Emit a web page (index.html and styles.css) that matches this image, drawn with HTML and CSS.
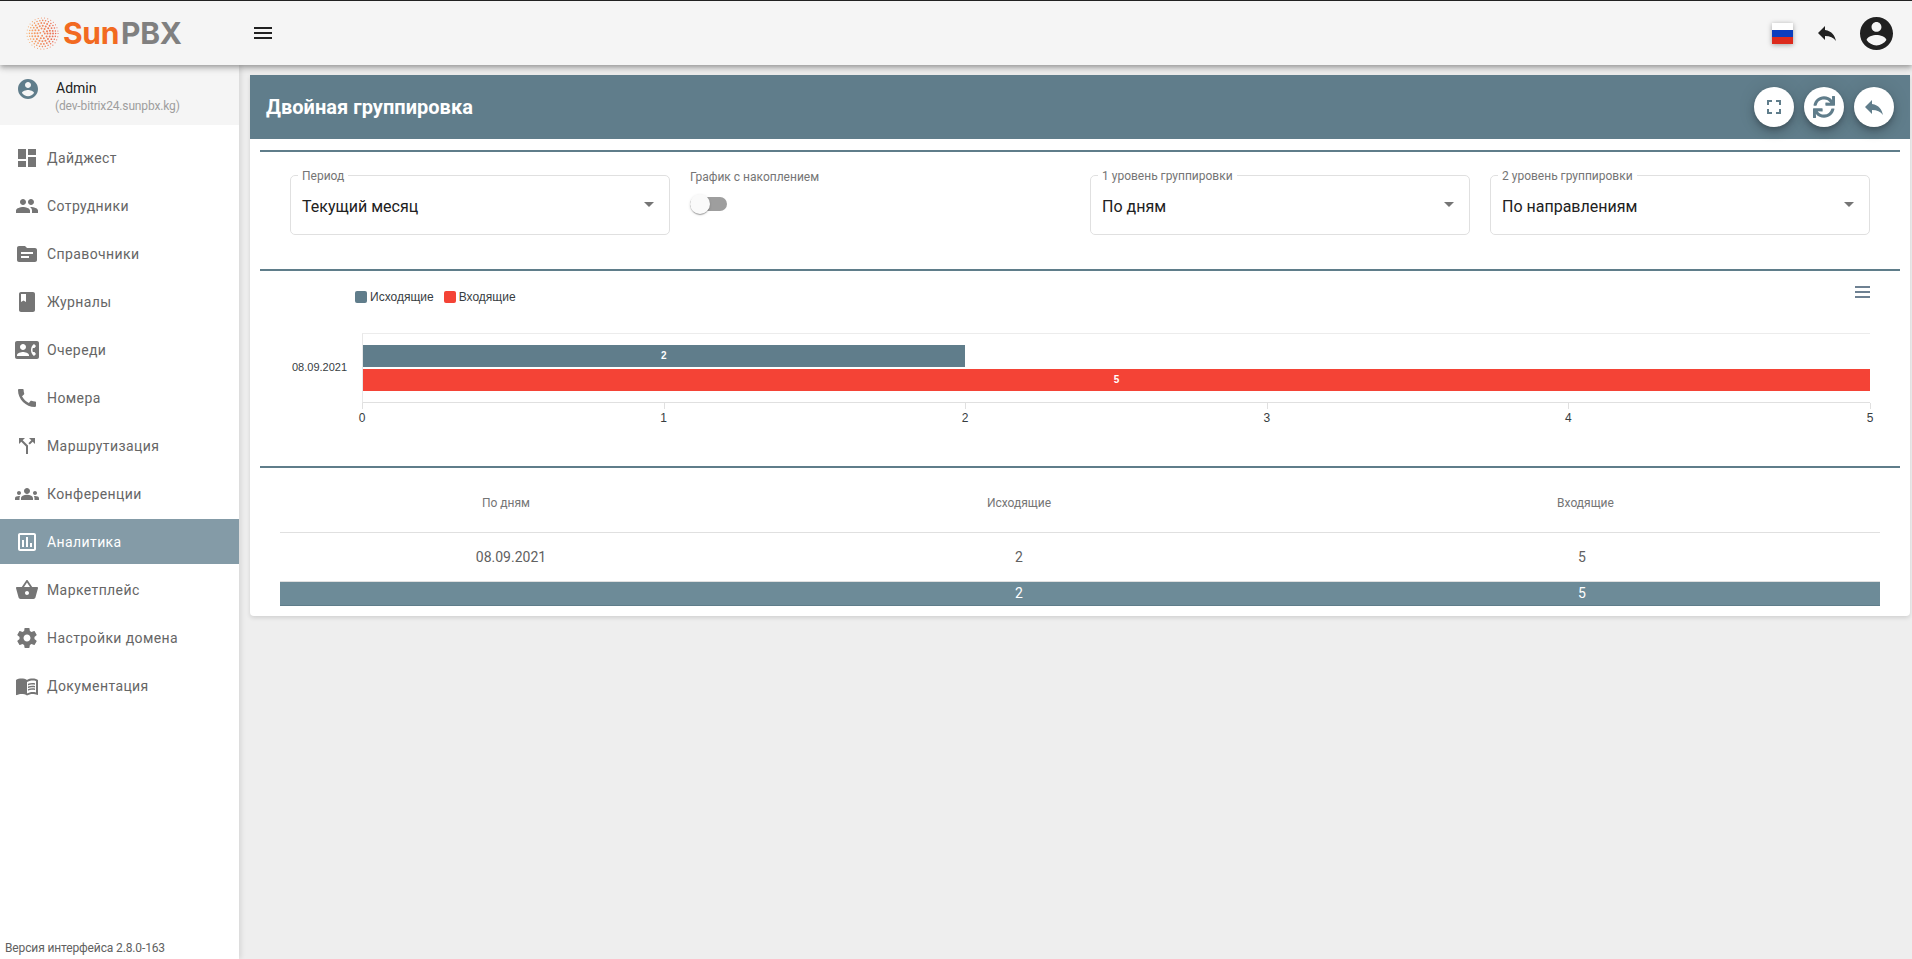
FILE: index.html
```html
<!DOCTYPE html>
<html lang="ru">
<head>
<meta charset="utf-8">
<title>SunPBX</title>
<link rel="stylesheet" href="styles.css">
</head>
<body>
<header class="topbar">
  <div class="logo">
    <svg class="logo-sun" viewBox="0 0 36 36">
      <defs>
        <linearGradient id="sun" gradientUnits="userSpaceOnUse" x1="0" y1="18" x2="36" y2="18">
          <stop offset="0" stop-color="#f9b26b"/>
          <stop offset="1" stop-color="#e9604f"/>
        </linearGradient>
      </defs>
      <g fill="none" stroke="url(#sun)" stroke-linecap="round">
        <circle cx="18" cy="18" r="2.5" stroke-width="2" stroke-dasharray="0 3.9"/>
        <circle cx="18" cy="18" r="5.5" stroke-width="2.2" stroke-dasharray="0 3.45"/>
        <circle cx="18" cy="18" r="8.5" stroke-width="2.2" stroke-dasharray="0 3.34"/>
        <circle cx="18" cy="18" r="11.5" stroke-width="2" stroke-dasharray="0 3.28"/>
        <circle cx="18" cy="18" r="14.3" stroke-width="1.7" stroke-dasharray="0 3.2"/>
        <circle cx="18" cy="18" r="17" stroke-width="1.2" stroke-dasharray="0 3.56"/>
      </g>
    </svg>
    <span class="logo-text"><span class="logo-sun-text">Sun</span><span class="logo-pbx">PBX</span></span>
  </div>
  <button class="burger" aria-label="Меню">
    <svg viewBox="0 0 24 24"><path d="M3 18h18v-2H3v2zm0-5h18v-2H3v2zm0-7v2h18V6H3z"/></svg>
  </button>
  <div class="top-actions">
    <span class="flag"><i class="flag-w"></i><i class="flag-b"></i><i class="flag-r"></i></span>
    <svg class="top-reply" viewBox="0 0 24 24"><path d="M10 9V5l-7 7 7 7v-4.1c5 0 8.5 1.6 11 5.1-1-5-4-10-11-11z"/></svg>
    <svg class="top-profile" viewBox="2 2 20 20"><path d="M12 2C6.48 2 2 6.48 2 12s4.48 10 10 10 10-4.48 10-10S17.52 2 12 2zm0 3c1.66 0 3 1.34 3 3s-1.34 3-3 3-3-1.34-3-3 1.34-3 3-3zm0 14.2c-2.5 0-4.71-1.28-6-3.22.03-1.99 4-3.08 6-3.08 1.99 0 5.97 1.09 6 3.08-1.29 1.94-3.5 3.22-6 3.22z"/></svg>
  </div>
</header>

<div class="shell">
  <aside class="sidebar">
    <div class="user">
      <svg class="user-icon" viewBox="2 2 20 20"><path d="M12 2C6.48 2 2 6.48 2 12s4.48 10 10 10 10-4.48 10-10S17.52 2 12 2zm0 3c1.66 0 3 1.34 3 3s-1.34 3-3 3-3-1.34-3-3 1.34-3 3-3zm0 14.2c-2.5 0-4.71-1.28-6-3.22.03-1.99 4-3.08 6-3.08 1.99 0 5.97 1.09 6 3.08-1.29 1.94-3.5 3.22-6 3.22z"/></svg>
      <div class="user-text">
        <div class="user-name">Admin</div>
        <div class="user-domain">(dev-bitrix24.sunpbx.kg)</div>
      </div>
    </div>
    <nav class="menu">
      <a class="menu-item"><svg viewBox="0 0 24 24"><path d="M3 13h8V3H3v10zm0 8h8v-6H3v6zm10 0h8V11h-8v10zm0-18v6h8V3h-8z"/></svg><span>Дайджест</span></a>
      <a class="menu-item"><svg viewBox="0 0 24 24"><path d="M16 11c1.66 0 2.99-1.34 2.99-3S17.66 5 16 5c-1.66 0-3 1.34-3 3s1.34 3 3 3zm-8 0c1.66 0 2.99-1.34 2.99-3S9.66 5 8 5C6.34 5 5 6.34 5 8s1.34 3 3 3zm0 2c-2.33 0-7 1.17-7 3.5V19h14v-2.5c0-2.33-4.67-3.5-7-3.5zm8 0c-.29 0-.62.02-.97.05 1.16.84 1.97 1.97 1.97 3.45V19h6v-2.5c0-2.33-4.67-3.5-7-3.5z"/></svg><span>Сотрудники</span></a>
      <a class="menu-item"><svg viewBox="0 0 24 24"><path d="M20 6h-8l-2-2H4c-1.1 0-1.99.9-1.99 2L2 18c0 1.1.9 2 2 2h16c1.1 0 2-.9 2-2V8c0-1.1-.9-2-2-2zm-6 10H6v-2h8v2zm4-4H6v-2h12v2z"/></svg><span>Справочники</span></a>
      <a class="menu-item"><svg viewBox="0 0 24 24"><path d="M18 2H6c-1.1 0-2 .9-2 2v16c0 1.1.9 2 2 2h12c1.1 0 2-.9 2-2V4c0-1.1-.9-2-2-2zM6 4h5v8l-2.5-1.5L6 12V4z"/></svg><span>Журналы</span></a>
      <a class="menu-item"><svg viewBox="0 0 24 24"><path d="M22 3H2C.9 3 0 3.9 0 5v14c0 1.1.9 2 2 2h20c1.1 0 1.99-.9 1.99-2L24 5c0-1.1-.9-2-2-2zM8 6c1.66 0 3 1.34 3 3s-1.34 3-3 3-3-1.34-3-3 1.34-3 3-3zm6 12H2v-1c0-2 4-3.1 6-3.1s6 1.1 6 3.1v1zm3.85-4h1.64L21 16l-1.99 1.99c-1.31-.98-2.28-2.38-2.73-3.99-.18-.64-.28-1.31-.28-2s.1-1.36.28-2c.45-1.62 1.42-3.01 2.73-3.99L21 8l-1.51 2h-1.64c-.22.63-.35 1.3-.35 2s.13 1.37.35 2z"/></svg><span>Очереди</span></a>
      <a class="menu-item"><svg viewBox="0 0 24 24"><path d="M20.01 15.38c-1.23 0-2.42-.2-3.53-.56-.35-.12-.74-.03-1.01.24l-1.57 1.97c-2.83-1.35-5.48-3.9-6.89-6.83l1.95-1.66c.27-.28.35-.67.24-1.02-.37-1.11-.56-2.3-.56-3.53 0-.54-.45-.99-.99-.99H4.19C3.65 3 3 3.24 3 3.99 3 13.28 10.73 21 20.01 21c.71 0 .99-.63.99-1.18v-3.45c0-.54-.45-.99-.99-.99z"/></svg><span>Номера</span></a>
      <a class="menu-item"><svg viewBox="0 0 24 24"><path d="M14 4l2.29 2.29-2.88 2.88 1.42 1.42 2.88-2.88L20 10V4zm-4 0H4v6l2.29-2.29 4.71 4.7V20h2v-8.41l-5.29-5.3z"/></svg><span>Маршрутизация</span></a>
      <a class="menu-item"><svg viewBox="0 0 24 24"><path d="M12 12.75c1.63 0 3.07.39 4.24.9 1.08.48 1.76 1.56 1.76 2.73V18H6v-1.61c0-1.18.68-2.26 1.76-2.73 1.17-.52 2.61-.91 4.24-.91zM4 13c1.1 0 2-.9 2-2s-.9-2-2-2-2 .9-2 2 .9 2 2 2zm1.13 1.1c-.37-.06-.74-.1-1.13-.1-.99 0-1.93.21-2.78.58C.48 14.9 0 15.62 0 16.43V18h4.5v-1.61c0-.83.23-1.61.63-2.29zM20 13c1.1 0 2-.9 2-2s-.9-2-2-2-2 .9-2 2 .9 2 2 2zm4 3.43c0-.81-.48-1.53-1.22-1.85-.85-.37-1.79-.58-2.78-.58-.39 0-.76.04-1.13.1.4.68.63 1.46.63 2.29V18H24v-1.57zM12 6c1.66 0 3 1.34 3 3s-1.34 3-3 3-3-1.34-3-3 1.34-3 3-3z"/></svg><span>Конференции</span></a>
      <a class="menu-item is-active"><svg viewBox="0 0 24 24"><path d="M19 3H5c-1.1 0-2 .9-2 2v14c0 1.1.9 2 2 2h14c1.1 0 2-.9 2-2V5c0-1.1-.9-2-2-2zm0 16H5V5h14v14zM7 10h2v7H7zm4-3h2v10h-2zm4 6h2v4h-2z"/></svg><span>Аналитика</span></a>
      <a class="menu-item"><svg viewBox="0 0 24 24"><path d="M17.21 9l-4.38-6.56c-.19-.28-.51-.42-.83-.42-.32 0-.64.14-.83.43L6.79 9H2c-.55 0-1 .45-1 1 0 .09.01.18.04.27l2.54 9.27c.23.84 1 1.46 1.92 1.46h13c.92 0 1.69-.62 1.93-1.46l2.54-9.27L23 10c0-.55-.45-1-1-1h-4.79zM9 9l3-4.4L15 9H9zm3 8c-1.1 0-2-.9-2-2s.9-2 2-2 2 .9 2 2-.9 2-2 2z"/></svg><span>Маркетплейс</span></a>
      <a class="menu-item"><svg viewBox="0 0 24 24"><path d="M19.43 12.98c.04-.32.07-.64.07-.98s-.03-.66-.07-.98l2.11-1.65c.19-.15.24-.42.12-.64l-2-3.46c-.12-.22-.39-.3-.61-.22l-2.49 1c-.52-.4-1.08-.73-1.69-.98l-.38-2.65C14.46 2.18 14.25 2 14 2h-4c-.25 0-.46.18-.49.42l-.38 2.65c-.61.25-1.17.59-1.69.98l-2.49-1c-.23-.09-.49 0-.61.22l-2 3.46c-.13.22-.07.49.12.64l2.11 1.65c-.04.32-.07.65-.07.98s.03.66.07.98l-2.11 1.65c-.19.15-.24.42-.12.64l2 3.46c.12.22.39.3.61.22l2.49-1c.52.4 1.08.73 1.69.98l.38 2.65c.03.24.24.42.49.42h4c.25 0 .46-.18.49-.42l.38-2.65c.61-.25 1.17-.59 1.69-.98l2.49 1c.23.09.49 0 .61-.22l2-3.46c.12-.22.07-.49-.12-.64l-2.11-1.65zM12 15.5c-1.93 0-3.5-1.57-3.5-3.5s1.57-3.5 3.5-3.5 3.5 1.57 3.5 3.5-1.57 3.5-3.5 3.5z"/></svg><span>Настройки домена</span></a>
      <a class="menu-item"><svg viewBox="0 0 24 24"><path d="M21 5c-1.11-.35-2.33-.5-3.5-.5-1.95 0-4.05.4-5.5 1.5-1.45-1.1-3.55-1.5-5.5-1.5S2.45 4.9 1 6v14.65c0 .25.25.5.5.5.1 0 .15-.05.25-.05C3.1 20.45 5.05 20 6.5 20c1.95 0 4.05.4 5.5 1.5 1.35-.85 3.8-1.5 5.5-1.5 1.65 0 3.35.3 4.75 1.05.1.05.15.05.25.05.25 0 .5-.25.5-.5V6c-.6-.45-1.25-.75-2-1zm0 13.5c-1.1-.35-2.3-.5-3.5-.5-1.7 0-4.15.65-5.5 1.5V8c1.35-.85 3.8-1.5 5.5-1.5 1.2 0 2.4.15 3.5.5v11.5z"/><path d="M17.5 10.5c.88 0 1.73.09 2.5.26V9.24c-.79-.15-1.64-.24-2.5-.24-1.7 0-3.24.29-4.5.83v1.66c1.13-.64 2.7-.99 4.5-.99zM13 12.49v1.66c1.13-.64 2.7-.99 4.5-.99.88 0 1.73.09 2.5.26V11.9c-.79-.15-1.64-.24-2.5-.24-1.7 0-3.24.3-4.5.83zM17.5 14.33c-1.7 0-3.24.29-4.5.83v1.66c1.13-.64 2.7-.99 4.5-.99.88 0 1.73.09 2.5.26v-1.52c-.79-.16-1.64-.24-2.5-.24z"/></svg><span>Документация</span></a>
    </nav>
    <div class="version">Версия интерфейса 2.8.0-163</div>
  </aside>

  <main class="content">
    <section class="card">
      <div class="card-head">
        <h1 class="card-title">Двойная группировка</h1>
        <div class="card-actions">
          <button class="round-btn" aria-label="На весь экран"><svg class="icon-24" viewBox="0 0 24 24"><path d="M7 14H5v5h5v-2H7v-3zm-2-4h2V7h3V5H5v5zm12 7h-3v2h5v-5h-2v3zM14 5v2h3v3h2V5h-5z"/></svg></button>
          <button class="round-btn" aria-label="Обновить"><svg class="icon-sync" viewBox="0 0 512 512"><path d="M440.65 12.57l4 82.77A247.16 247.16 0 0 0 255.83 8C134.73 8 33.91 94.92 12.29 209.82A12 12 0 0 0 24.09 224h49.05a12 12 0 0 0 11.67-9.26 175.91 175.91 0 0 1 317-56.94l-101.46-4.86a12 12 0 0 0-12.57 12v47.41a12 12 0 0 0 12 12H500a12 12 0 0 0 12-12V12a12 12 0 0 0-12-12h-47.37a12 12 0 0 0-11.98 12.57zM255.83 432a175.61 175.61 0 0 1-146-77.8l101.8 4.87a12 12 0 0 0 12.57-12v-47.4a12 12 0 0 0-12-12H12a12 12 0 0 0-12 12V500a12 12 0 0 0 12 12h47.35a12 12 0 0 0 12-12.6l-4.15-82.57A247.17 247.17 0 0 0 255.83 504c121.11 0 221.93-86.92 243.55-201.82a12 12 0 0 0-11.8-14.18h-49.05a12 12 0 0 0-11.67 9.26A175.86 175.86 0 0 1 255.83 432z"/></svg></button>
          <button class="round-btn" aria-label="Назад"><svg class="icon-24" viewBox="0 0 24 24"><path d="M10 9V5l-7 7 7 7v-4.1c5 0 8.5 1.6 11 5.1-1-5-4-10-11-11z"/></svg></button>
        </div>
      </div>

      <div class="block filters">
        <fieldset class="select">
          <legend>Период</legend>
          <span class="select-value">Текущий месяц</span>
          <i class="caret"></i>
        </fieldset>
        <div class="toggle-field">
          <div class="toggle-label">График с накоплением</div>
          <div class="toggle"><i class="toggle-thumb"></i></div>
        </div>
        <fieldset class="select">
          <legend>1 уровень группировки</legend>
          <span class="select-value">По дням</span>
          <i class="caret"></i>
        </fieldset>
        <fieldset class="select">
          <legend>2 уровень группировки</legend>
          <span class="select-value">По направлениям</span>
          <i class="caret"></i>
        </fieldset>
      </div>

      <div class="block chart">
        <div class="chart-top">
          <div class="legend">
            <span class="legend-item"><i class="swatch swatch-out"></i>Исходящие</span>
            <span class="legend-item"><i class="swatch swatch-in"></i>Входящие</span>
          </div>
          <div class="chart-menu"><i></i><i></i><i></i></div>
        </div>
        <div class="plot-row">
          <div class="plot-cat">08.09.2021</div>
          <div class="plot-area">
            <div class="plot">
              <div class="bar bar-out" style="width:39.93%">2</div>
              <div class="bar bar-in" style="width:100%">5</div>
            </div>
            <div class="axis">
              <span class="tick">0</span><span class="tick">1</span><span class="tick">2</span><span class="tick">3</span><span class="tick">4</span><span class="tick">5</span>
            </div>
          </div>
        </div>
      </div>

      <div class="block table-wrap">
        <table class="table">
          <thead>
            <tr><th>По дням</th><th>Исходящие</th><th>Входящие</th></tr>
          </thead>
          <tbody>
            <tr><td>08.09.2021</td><td>2</td><td>5</td></tr>
          </tbody>
          <tfoot>
            <tr><td></td><td>2</td><td>5</td></tr>
          </tfoot>
        </table>
      </div>
    </section>
  </main>
</div>
</body>
</html>
```

FILE: styles.css
```css
* { box-sizing: border-box; }
html, body { height: 100%; }
body {
  margin: 0;
  height: 959px;
  overflow: hidden;
  background: #eee;
  font-family: Roboto, "Liberation Sans", sans-serif;
  color: #212121;
  display: flex;
  flex-direction: column;
}
button { border: 0; padding: 0; background: none; cursor: pointer; }

/* top bar */
.topbar {
  height: 65px;
  flex: none;
  border-top: 1px solid #222;
  background: #f5f5f5;
  display: flex;
  align-items: center;
  position: relative;
  z-index: 3;
  box-shadow: 0 2px 4px -1px rgba(0,0,0,.2), 0 4px 5px 0 rgba(0,0,0,.14), 0 1px 10px 0 rgba(0,0,0,.12);
}
.logo { width: 239px; padding-left: 26px; display: flex; align-items: center; gap: 4px; }
.logo-sun { width: 33px; height: 33px; flex: none; }
.logo-text { font-family: Inter, Roboto, sans-serif; font-weight: 700; font-size: 30px; letter-spacing: -.3px; line-height: 1; }
.logo-sun-text { color: #f26a21; }
.logo-pbx { color: #808080; margin-left: 2px; }
.burger { width: 24px; height: 24px; margin-left: 12px; }
.burger svg { width: 24px; height: 24px; fill: #212121; display: block; }
.top-actions { margin-left: auto; display: flex; align-items: center; padding-right: 19px; }
.flag { width: 21px; height: 21px; display: flex; flex-direction: column; box-shadow: 0 1px 5px rgba(0,0,0,.35); }
.flag i { flex: 1; display: block; }
.flag-w { background: #fff; }
.flag-b { background: #0a3dbd; }
.flag-r { background: #dc2a1c; }
.top-reply { width: 24px; height: 24px; fill: #212121; margin-left: 22px; }
.top-profile { width: 33px; height: 33px; fill: #212121; margin-left: 21px; }

.shell { flex: 1; display: flex; min-height: 0; }

/* sidebar */
.sidebar {
  width: 239px;
  flex: none;
  background: #fff;
  display: flex;
  flex-direction: column;
  position: relative;
  z-index: 2;
  box-shadow: 2px 0 5px rgba(0,0,0,.1);
}
.user { height: 60px; background: #f5f5f5; display: flex; padding: 14px 0 0 18px; flex: none; }
.user-icon { width: 20px; height: 20px; fill: #607d8b; flex: none; }
.user-text { margin-left: 18px; padding-top: 1px; }
.user-name { font-size: 14px; line-height: 16px; color: #212121; }
.user-domain { font-size: 12px; line-height: 14px; margin-top: 3px; margin-left: -1px; color: #9e9e9e; letter-spacing: -.15px; }
.menu { padding-top: 10px; display: flex; flex-direction: column; gap: 3px; }
.menu-item { height: 45px; display: flex; align-items: center; padding-left: 15px; font-size: 14px; letter-spacing: .4px; color: #666; }
.menu-item svg { width: 24px; height: 24px; fill: #757575; flex: none; margin-right: 8px; }
.menu-item.is-active { background: #849ba7; color: #fff; }
.menu-item.is-active svg { fill: #fff; }
.version { margin-top: auto; padding: 0 0 4px 5px; font-size: 12px; line-height: 14px; color: #616161; letter-spacing: -.13px; }

/* content */
.content { flex: 1; min-width: 0; padding: 10px 2px 0 11px; }
.card { background: #fff; border-radius: 0 0 4px 4px; padding-bottom: 10px; box-shadow: 0 2px 4px rgba(0,0,0,.12); }
.card-head {
  height: 64px;
  background: #607d8b;
  display: flex;
  align-items: center;
  padding: 0 16px;
}
.card-title { margin: 0; font-size: 20px; font-weight: 700; letter-spacing: .03px; color: #fff; }
.card-actions { margin-left: auto; display: flex; gap: 10px; }
.round-btn {
  width: 40px; height: 40px; border-radius: 50%;
  background: #fff;
  display: flex; align-items: center; justify-content: center;
  box-shadow: 0 3px 5px -1px rgba(0,0,0,.2), 0 6px 10px 0 rgba(0,0,0,.14), 0 1px 18px 0 rgba(0,0,0,.12);
}
.icon-24 { width: 24px; height: 24px; fill: #607d8b; }
.icon-sync { width: 22px; height: 22px; fill: #607d8b; }

.block { margin: 11px 10px 0; border-top: 2px solid #5f7d8a; }
.filters {
  height: 119px;
  margin-bottom: 0;
  padding: 23px 10px 0;
  display: grid;
  grid-template-columns: repeat(4, 380px);
  column-gap: 20px;
  justify-content: center;
  align-items: start;
}
.select {
  margin: -7px 0 0;
  padding: 0 11px;
  height: 67px;
  border: 1px solid #e0e0e0;
  border-radius: 5px;
  position: relative;
  min-width: 0;
}
.select legend { padding: 0 4px; margin-left: -4px; font-size: 12px; line-height: 14px; color: #757575; position: relative; top: 1px; }
.select-value { display: block; margin-top: 13px; font-size: 16px; line-height: 24px; color: #212121; }
.caret {
  position: absolute; right: 15px; top: 20px;
  width: 0; height: 0;
  border-left: 5px solid transparent;
  border-right: 5px solid transparent;
  border-top: 5px solid #757575;
}
.toggle-field { margin-top: -5px; }
.toggle-label { font-size: 12px; line-height: 14px; color: #757575; }
.toggle { width: 37px; height: 14px; margin-top: 13px; background: #9e9e9e; border-radius: 7px; position: relative; }
.toggle-thumb {
  position: absolute; left: 0; top: -3px;
  width: 20px; height: 20px; border-radius: 50%;
  background: #fafafa;
  box-shadow: 0 2px 1px -1px rgba(0,0,0,.2), 0 1px 1px 0 rgba(0,0,0,.14), 0 1px 3px 0 rgba(0,0,0,.12);
}

.chart { margin-top: 0; height: 197px; padding-top: 18px; font-family: "Liberation Sans", Arial, sans-serif; }
.chart-top { height: 44px; display: flex; align-items: flex-start; justify-content: space-between; padding-left: 95px; padding-right: 30px; }
.legend { display: flex; gap: 10px; font-size: 12px; line-height: 12px; color: #373d3f; }
.legend-item { display: flex; align-items: center; padding-top: 2px; }
.swatch { width: 12px; height: 12px; border-radius: 2px; margin-right: 3px; display: block; }
.swatch-out { background: #607d8b; }
.swatch-in { background: #f44336; }
.chart-menu { display: flex; flex-direction: column; gap: 3px; margin-top: -3px; width: 15px; }
.chart-menu i { display: block; height: 2px; background: #6e8192; }
.plot-row { display: flex; }
.plot-cat { width: 102px; padding: 27px 0 0 32px; font-size: 11px; line-height: 14px; color: #373d3f; white-space: nowrap; }
.plot-area { width: 1508px; }
.plot {
  height: 70px;
  border-top: 1px solid #ececec;
  border-bottom: 1px solid #e0e0e0;
  border-left: 1px solid #e8e8e8;
  padding-top: 11px;
  display: flex;
  flex-direction: column;
  gap: 2px;
  font-size: 10px;
  font-weight: 700;
  color: #fff;
}
.bar { height: 22px; line-height: 22px; text-align: center; }
.bar-out { background: #607d8b; }
.bar-in { background: #f44336; }
.axis { display: flex; justify-content: space-between; font-size: 12px; color: #373d3f; }
.tick { width: 0; display: flex; flex-direction: column; align-items: center; padding-top: 8px; line-height: 14px; position: relative; white-space: nowrap; }
.tick::before { content: ""; position: absolute; top: 0; left: 0; width: 1px; height: 6px; background: #e0e0e0; }

.table-wrap { margin-top: 0; padding: 0 20px; }
.table { width: 100%; border-collapse: collapse; table-layout: fixed; }
.table th { height: 64px; padding: 7px 0 0; font-size: 12px; font-weight: 400; color: #757575; border-bottom: 1px solid #e0e0e0; }
.table td { padding: 0; }
.table tbody td { height: 49px; font-size: 14px; color: #616161; text-align: center; border-bottom: 1px solid #e0e0e0; }
.table tfoot td { height: 24px; background: #6d8b98; color: #fff; font-size: 14px; text-align: center; border-bottom: 1px solid #5f7d8a; }
.table th:nth-child(1), .table td:nth-child(1) { width: 462px; }
.table th:nth-child(1) { padding-right: 10px; }
.table th:nth-child(2), .table td:nth-child(2) { width: 554px; }
.table th:nth-child(3) { padding-right: 5px; }
.table td:nth-child(3) { padding-right: 12px; }
```
